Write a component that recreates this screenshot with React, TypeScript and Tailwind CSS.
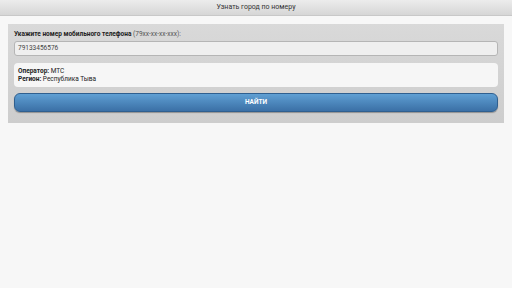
export default function App() {
  return (
    <div className="min-h-screen w-full bg-[#f7f7f7] font-['Roboto',sans-serif] text-[#333]">
      <div className="flex h-[16px] items-center justify-center border-b border-[#c8c8c8] bg-gradient-to-b from-[#ececec] to-[#d6d6d6] text-[7px] text-[#333]">
        Узнать город по номеру
      </div>
      <div className="px-[8px] pt-[8px]">
        <div className="flex flex-col bg-gradient-to-b from-[#d9d9d9] to-[#cdcdcd] px-[6px] pt-[6px] pb-[11px]">
          <div className="text-[6.5px] leading-[9px] text-[#222]">
            <span className="font-bold">Укажите номер мобильного телефона</span>{' '}
            <span className="text-[#555]">(79xx-xx-xx-xxx):</span>
          </div>
          <div className="mt-[2px] flex h-[15px] items-center rounded-[3px] border border-[#b5b5b5] bg-[#efefef] px-[3px] text-[6.5px] text-[#444]">
            79133456576
          </div>
          <div className="mt-[7px] flex h-[24px] flex-col justify-center rounded-[4px] bg-[#f6f6f6] px-[4px] text-[6.5px] leading-[8px] text-[#222]">
            <div><span className="font-bold">Оператор:</span> МТС</div>
            <div><span className="font-bold">Регион:</span> Республика Тыва</div>
          </div>
          <div className="mt-[6px] flex h-[19px] items-center justify-center rounded-[6px] border border-[#2f5f8f] bg-gradient-to-b from-[#5f9fd3] to-[#3b70a6] text-[6.5px] font-bold text-white shadow-[0_1px_1px_rgba(0,0,0,0.3)]">
            НАЙТИ
          </div>
        </div>
      </div>
    </div>
  )
}
